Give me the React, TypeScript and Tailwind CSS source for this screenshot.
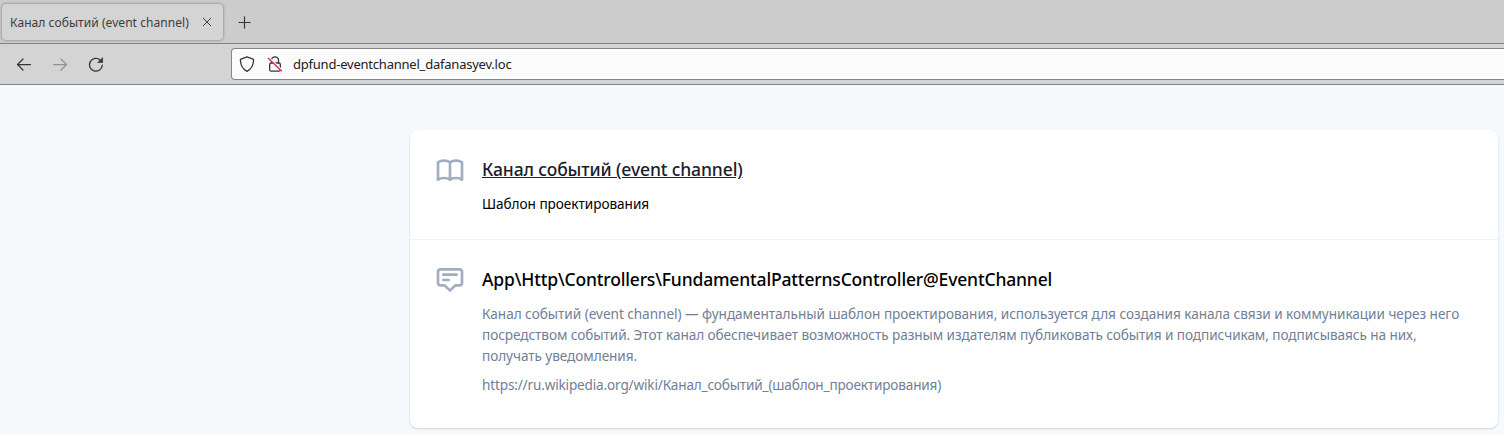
function Tab() {
  return (
    <div className="flex h-[43px] items-start bg-[#cccccc]">
      <div className="ml-[2px] mt-[4px] flex h-[36px] w-[221px] items-center rounded-[4px] bg-[#d4d4d4] pl-[8px] shadow-[0_0_3px_rgba(0,0,0,0.45)]">
        <span className="w-[192px] whitespace-nowrap pt-[2px] text-[12px] leading-[16px] tracking-[0.06px] text-[#3c3c3c]">Канал событий (event channel)</span>
        <svg className="h-[10px] w-[10px]" viewBox="0 0 10 10" fill="none" stroke="#3d3d3d" strokeWidth="1">
          <path d="M1 1l8 8M9 1l-8 8" />
        </svg>
      </div>
      <svg className="ml-[15px] mt-[16px] h-[13px] w-[13px]" viewBox="0 0 13 13" fill="none" stroke="#353535" strokeWidth="1.2">
        <path d="M6.5 .5v12M.5 6.5h12" />
      </svg>
    </div>
  );
}

function Toolbar() {
  return (
    <div className="flex h-[42px] items-center border-y border-y-[#858585] bg-[#d4d4d4]">
      <svg className="ml-[16px] h-[16px] w-[16px]" viewBox="0 0 16 16" fill="none" stroke="#353535" strokeWidth="1.25" strokeLinecap="round" strokeLinejoin="round">
        <path d="M14.500 8.500H1.700M7 3L1.500 8.500L7 14" />
      </svg>
      <svg className="ml-[20px] h-[16px] w-[16px]" viewBox="0 0 16 16" fill="none" stroke="#929292" strokeWidth="1.25" strokeLinecap="round" strokeLinejoin="round">
        <path d="M1.500 8.500h12.800M9 3L14.500 8.500L9 14" />
      </svg>
      <svg className="ml-[20px] h-[16px] w-[16px]" viewBox="0 0 16 16" fill="none" stroke="#353535" strokeWidth="1.3" strokeLinecap="round">
        <path d="M14.300 9.200A6.400 6.400 0 1 1 12.200 4" />
        <path d="M14.600 2v4.500H10z" fill="#353535" strokeWidth=".7" strokeLinejoin="round" />
      </svg>
      <div className="ml-[127px] flex h-[32px] flex-1 items-center rounded-l-[4px] border border-r-0 border-[#858585] bg-[#fcfcfc] pl-[7px]">
        <svg className="h-[16px] w-[16px]" viewBox="0 0 16 16" fill="none" stroke="#353535" strokeWidth="1.3" strokeLinejoin="round">
          <path d="M8 .8L14 3.200Q14.700 3.500 14.600 4.500C14.300 9.500 12.500 13 8 15.300C3.500 13 1.700 9.500 1.400 4.500Q1.300 3.500 2 3.200Z" />
        </svg>
        <svg className="ml-[12px] h-[16px] w-[16px]" viewBox="0 0 16 16" fill="none" stroke="#353535" strokeWidth="1.3">
          <path d="M4.500 7V4.300a3.500 3.500 0 0 1 7 0V7" />
          <rect x="2.700" y="7" width="10.600" height="8.200" rx="1.500" />
          <path d="M1.500 1.500L15 14.500" stroke="#fcfcfc" strokeWidth="2" />
          <path d="M1 2L14.800 15.300" stroke="#e22850" strokeWidth="1.4" />
        </svg>
        <span className="ml-[10px] text-[13px] leading-[18px] tracking-[-0.22px] text-[#202020]">dpfund-eventchannel_dafanasyev.loc</span>
      </div>
    </div>
  );
}

function CardIcon({ path }: { path: string }) {
  return (
    <svg className="h-8 w-8 shrink-0 text-[#a0aec0]" viewBox="0 0 24 24" fill="none" stroke="currentColor" strokeWidth="2" strokeLinecap="round" strokeLinejoin="round">
      <path d={path} />
    </svg>
  );
}

const book =
  "M12 6.253v13m0-13C10.832 5.477 9.246 5 7.5 5S4.168 5.477 3 6.253v13C4.168 18.477 5.754 18 7.5 18s3.332.477 4.5 1.253m0-13C13.168 5.477 14.754 5 16.5 5c1.747 0 3.332.477 4.5 1.253v13C19.832 18.477 18.247 18 16.5 18c-1.746 0-3.332.477-4.5 1.253";
const message =
  "M7 8h10M7 12h4m1 8l-4-4H5a2 2 0 01-2-2V6a2 2 0 012-2h14a2 2 0 012 2v8a2 2 0 01-2 2h-3l-4 4z";

export default function App() {
  return (
    <div className="flex h-[435px] flex-col overflow-hidden bg-[#f7fafc] font-['Noto_Sans',sans-serif]">
      <Tab />
      <Toolbar />
      <main className="ml-[410px] mt-[45px] h-[298px] w-[1088px] rounded-lg bg-white shadow-[0_1px_3px_rgba(0,0,0,0.1),0_1px_2px_rgba(0,0,0,0.06)]">
        <section className="flex h-[109px] gap-4 pl-6 pt-6">
          <CardIcon path={book} />
          <div className="whitespace-nowrap">
            <h1 className="mt-[2px] text-[17.5px] font-medium leading-[27px] tracking-[-0.12px] text-[#1a202c] underline">Канал событий (event channel)</h1>
            <p className="mt-[10px] text-[13.6px] leading-[21px] tracking-[-0.04px] text-black">Шаблон проектирования</p>
          </div>
        </section>
        <section className="flex h-[189px] gap-4 border-t border-[#edf2f7] pl-6 pt-6">
          <CardIcon path={message} />
          <div className="whitespace-nowrap">
            <h2 className="mt-[2px] text-[17.5px] font-medium leading-[27px] tracking-[-0.17px] text-black">App\Http\Controllers\FundamentalPatternsController@EventChannel</h2>
            <div className="mt-[10px] text-[13.6px] leading-[21px] text-[#718096]">
              <p className="tracking-[-0.037px]">Канал событий (event channel) — фундаментальный шаблон проектирования, используется для создания канала связи и коммуникации через него</p>
              <p className="tracking-[-0.07px]">посредством событий. Этот канал обеспечивает возможность разным издателям публиковать события и подписчикам, подписываясь на них,</p>
              <p className="tracking-[-0.06px]">получать уведомления.</p>
              <p className="mt-2 tracking-[-0.17px]">https://ru.wikipedia.org/wiki/Канал_событий_(шаблон_проектирования)</p>
            </div>
          </div>
        </section>
      </main>
    </div>
  );
}
